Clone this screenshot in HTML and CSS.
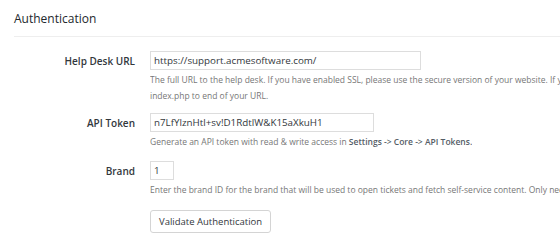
FILE: index.html
```html
<!DOCTYPE html>
<html lang="en">
<head>
  <meta charset="UTF-8">
  <title>Authentication</title>
  <link rel="stylesheet" href="styles.css">
</head>
<body>
  <!-- Seção de autenticação -->
  <div class="section">
    <h2 class="section-title">Authentication</h2>

    <div class="form-table">
      <div class="row row-url">
        <label class="label" for="url">Help Desk URL</label>
        <div class="field">
          <input id="url" class="input input-url" type="text" value="https://support.acmesoftware.com/">
          <p class="desc">The full URL to the help desk. If you have enabled SSL, please use the secure version of your website. If you are not using URL rewriting, add<br>index.php to end of your URL.</p>
        </div>
      </div>

      <div class="row">
        <label class="label" for="token">API Token</label>
        <div class="field">
          <input id="token" class="input input-token" type="text" value="n7LfYlznHtl+sv!D1RdtlW&amp;K15aXkuH1">
          <p class="desc">Generate an API token with read &amp; write access in <b>Settings -&gt; Core -&gt; API Tokens.</b></p>
        </div>
      </div>

      <div class="row row-brand">
        <label class="label" for="brand">Brand</label>
        <div class="field">
          <input id="brand" class="input input-brand" type="text" value="1">
          <p class="desc">Enter the brand ID for the brand that will be used to open tickets and fetch self-service content. Only needed if you have multiple brands.</p>
        </div>
      </div>

      <div class="row">
        <div class="label"></div>
        <div class="field">
          <button class="button" type="button">Validate Authentication</button>
        </div>
      </div>
    </div>
  </div>
</body>
</html>
```

FILE: styles.css
```css
* {
  margin: 0;
  padding: 0;
  box-sizing: border-box;
}

html, body {
  height: 100%;
  overflow: hidden;
  background: #fff;
  font-family: 'Open Sans', sans-serif;
  color: #23282d;
}

.section {
  padding: 9px 0 0 14px;
}

.section-title {
  font-size: 12px;
  font-weight: 400;
  line-height: 20px;
  color: #23282d;
  padding-bottom: 7px;
  border-bottom: 1px solid #eeeeee;
}

.form-table {
  padding-top: 14px;
}

.row {
  display: flex;
  align-items: flex-start;
  margin-bottom: 11px;
}

.row-url { margin-bottom: 9px; }
.row-brand { margin-bottom: 10px; }

.label {
  width: 121px;
  flex-shrink: 0;
  text-align: right;
  font-size: 10px;
  font-weight: 600;
  line-height: 19px;
  padding-top: 1px;
  color: #32373c;
}

.field {
  margin-left: 15px;
  white-space: nowrap;
  overflow: hidden;
  min-width: 0;
}

.input {
  display: block;
  height: 19px;
  padding: 0 3px;
  border: 1px solid #dddddd;
  font-family: 'Open Sans', sans-serif;
  font-size: 9.8px;
  color: #32373c;
  background: #fff;
  outline: none;
}

.input-url { width: 271px; }
.input-token { width: 224px; }
.input-brand { width: 24px; }

.desc {
  margin-top: 2px;
  font-size: 8.5px;
  line-height: 16px;
  color: #777777;
}

.desc b {
  font-weight: 600;
  color: #555d66;
}

.button {
  height: 23px;
  padding: 0 8px;
  border: 1px solid #d4d4d4;
  border-radius: 3px;
  background: #fff;
  font-family: 'Open Sans', sans-serif;
  font-size: 9.5px;
  color: #32373c;
}
```
